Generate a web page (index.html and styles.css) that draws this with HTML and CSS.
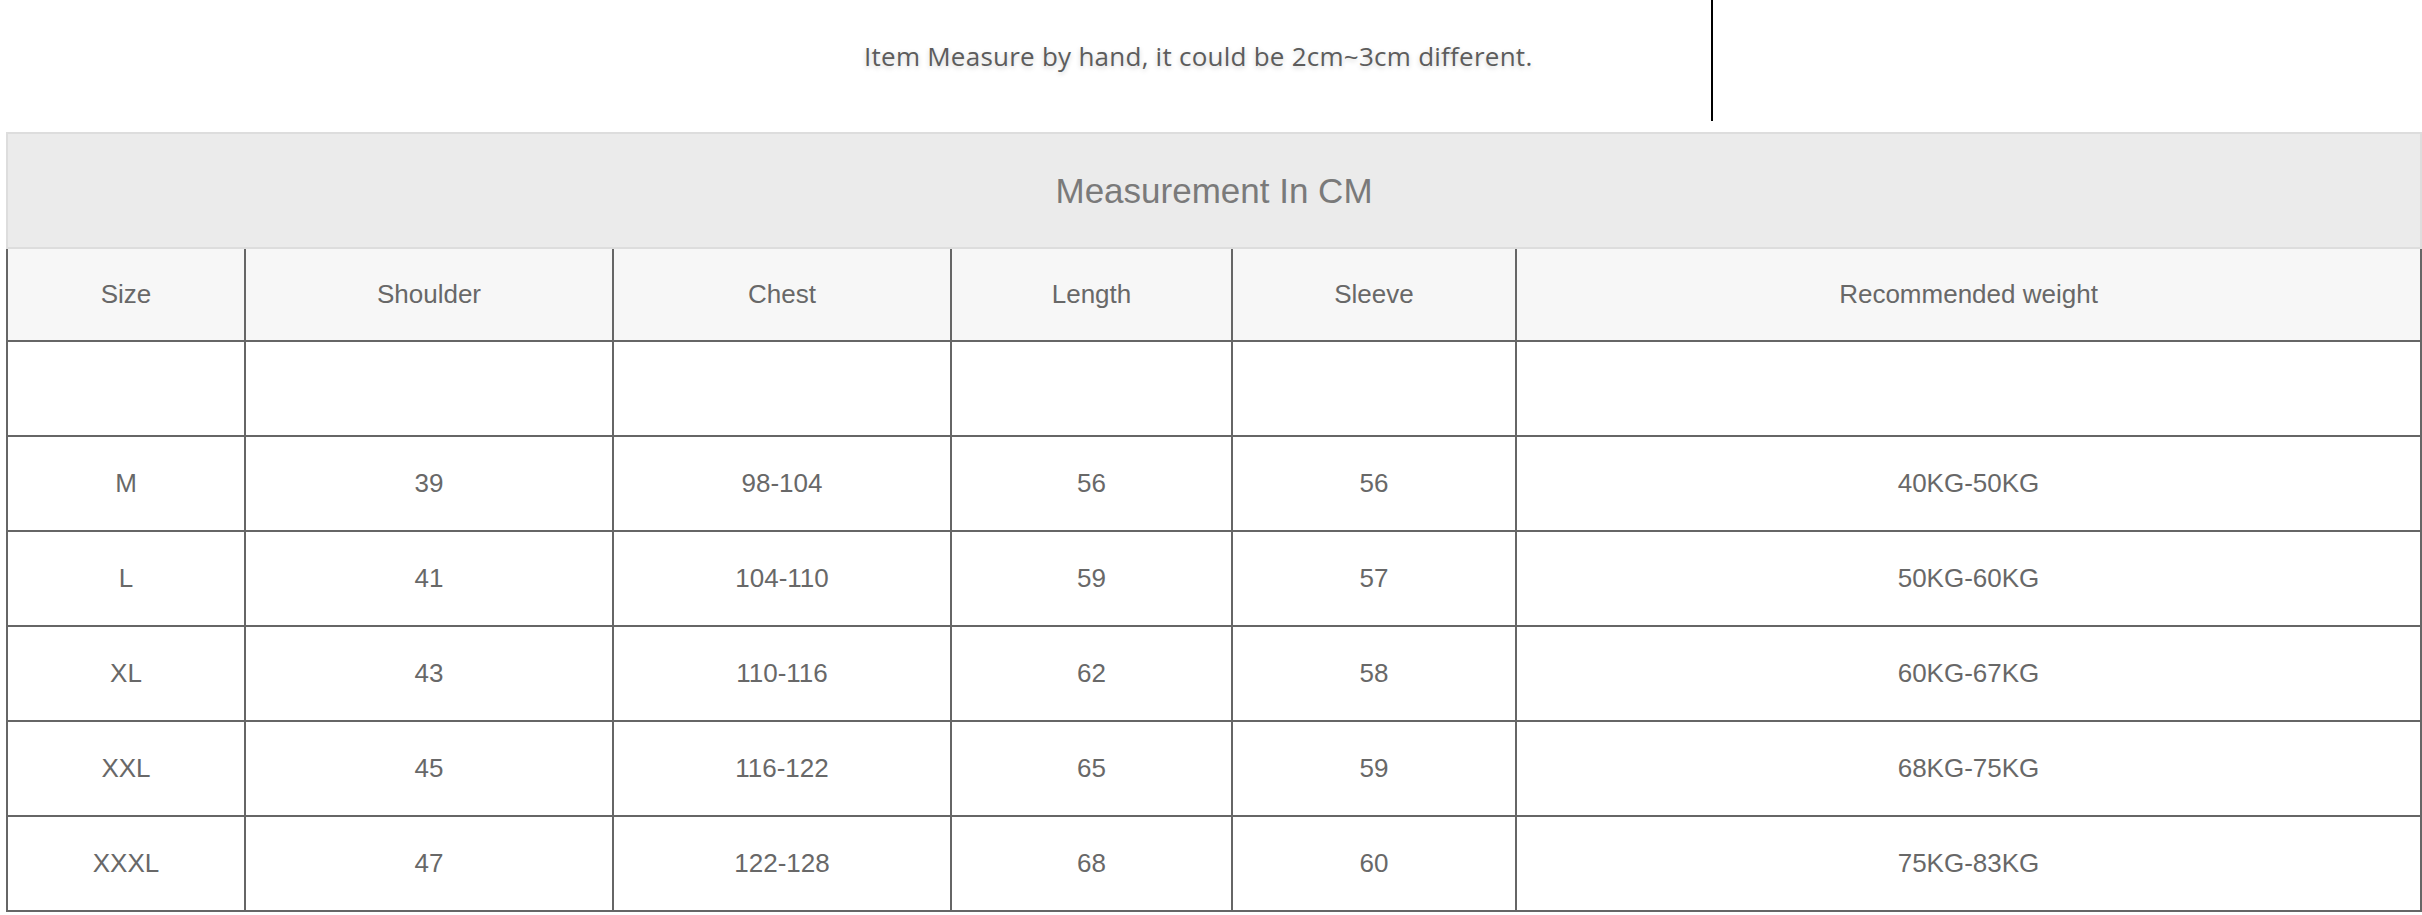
FILE: index.html
```html
<!DOCTYPE html>
<html lang="en">
<head>
<meta charset="utf-8">
<title>Size Chart</title>
<link rel="stylesheet" href="styles.css">
</head>
<body>
<div class="page">
  <div class="top">
    <p class="note">Item Measure by hand, it could be 2cm~3cm different.</p>
    <div class="vline"></div>
  </div>
  <table class="chart">
    <colgroup>
      <col class="c-size">
      <col class="c-shoulder">
      <col class="c-chest">
      <col class="c-length">
      <col class="c-sleeve">
      <col class="c-weight">
    </colgroup>
    <thead>
      <tr class="title-row"><th colspan="6">Measurement In CM</th></tr>
      <tr class="head-row">
        <th>Size</th><th>Shoulder</th><th>Chest</th><th>Length</th><th>Sleeve</th><th>Recommended weight</th>
      </tr>
    </thead>
    <tbody>
      <tr class="empty-row"><td></td><td></td><td></td><td></td><td></td><td></td></tr>
      <tr><td>M</td><td>39</td><td>98-104</td><td>56</td><td>56</td><td>40KG-50KG</td></tr>
      <tr><td>L</td><td>41</td><td>104-110</td><td>59</td><td>57</td><td>50KG-60KG</td></tr>
      <tr><td>XL</td><td>43</td><td>110-116</td><td>62</td><td>58</td><td>60KG-67KG</td></tr>
      <tr><td>XXL</td><td>45</td><td>116-122</td><td>65</td><td>59</td><td>68KG-75KG</td></tr>
      <tr><td>XXXL</td><td>47</td><td>122-128</td><td>68</td><td>60</td><td>75KG-83KG</td></tr>
    </tbody>
  </table>
</div>
</body>
</html>
```
FILE: styles.css
```css
html, body {
  margin: 0;
  padding: 0;
  background: #ffffff;
}

.page {
  width: 2414px;
  padding-left: 6px;
  font-family: "Liberation Sans", Arial, sans-serif;
}

.top {
  height: 132px;
  display: grid;
  grid-template-columns: 858px 847px 2px 1fr;
  align-items: start;
}

.note {
  grid-column: 2;
  margin: 0;
  padding-top: 38px;
  font-family: "Open Sans", "Noto Sans", sans-serif;
  font-size: 26px;
  line-height: 36px;
  color: #5c5c5c;
  white-space: nowrap;
  letter-spacing: 0.25px;
  text-shadow: 0 2px 5px rgba(0, 0, 0, 0.18);
}

.vline {
  grid-column: 3;
  width: 2px;
  height: 121px;
  background: #000000;
}

.chart {
  width: 2414px;
  table-layout: fixed;
  border-collapse: collapse;
  border-spacing: 0;
}

.c-size { width: 238px; }
.c-shoulder { width: 368px; }
.c-chest { width: 338px; }
.c-length { width: 281px; }
.c-sleeve { width: 284px; }
.c-weight { width: 905px; }

.chart th,
.chart td {
  border: 2px solid #666666;
  padding: 0;
  text-align: center;
  vertical-align: middle;
  font-weight: normal;
  font-size: 26px;
  color: #686868;
}

.title-row th {
  height: 113px;
  background: #ebebeb;
  border: 2px solid #dddddd;
  font-size: 35px;
  color: #7a7a7a;
}

.head-row th {
  height: 91px;
  background: #f7f7f7;
}

.chart tbody td {
  height: 93px;
  background: #ffffff;
}
```
